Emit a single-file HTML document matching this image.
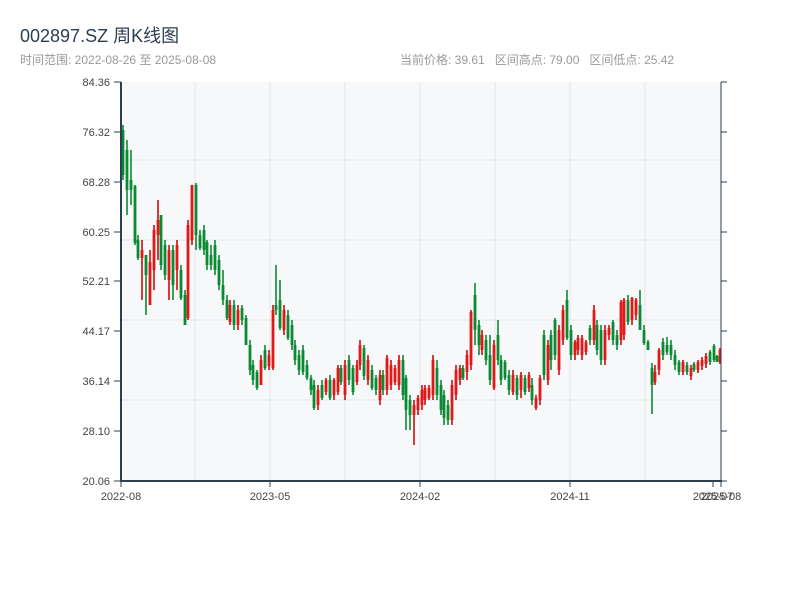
<!DOCTYPE html>
<html><head><meta charset="utf-8">
<style>
body{margin:0;background:#fff;width:800px;height:600px;overflow:hidden;font-family:"Liberation Sans","Noto Sans CJK SC",sans-serif;}
.t{position:absolute;left:20px;top:22px;font-size:18px;color:#2c3e50;}
.s{position:absolute;left:20px;top:51px;font-size:12px;color:#999;}
.r{position:absolute;left:400px;top:51px;font-size:12px;color:#999;}
svg{position:absolute;left:0;top:0;}
</style></head><body>
<div class="t">002897.SZ 周K线图</div>
<div class="s">时间范围: 2022-08-26 至 2025-08-08</div>
<div class="r">当前价格: 39.61&nbsp;&nbsp; 区间高点: 79.00&nbsp;&nbsp; 区间低点: 25.42</div>
<svg width="800" height="600" xmlns="http://www.w3.org/2000/svg" font-family="Liberation Sans, sans-serif" font-size="11" fill="#444">
<rect x="121" y="82" width="600" height="399" fill="#f7f8fa"/>
<g stroke="#e3e5ea" stroke-width="1">
<path d="M195 82V481M270 82V481M345 82V481M420 82V481M495 82V481M570 82V481M645 82V481M121 160H721M121 240H721M121 320H721M121 400H721"/>
</g>
<g stroke="#0a8a32" fill="none">
<path stroke-width="1.6" d="M123 125V180M127 140V215M131 150V205M135 185V245M138 235V260M146 255V315M161 215V270M165 240V280M173 245V300M181 265V300M185 290V325M196 183V250M200 230V250M204 225V255M207 240V270M211 245V270M215 240V275M219 255V290M223 270V305M227 295V320M234 300V330M242 305V325M246 315V345M250 340V375M253 360V385M257 370V390M265 345V370M276 265V315M280 280V330M288 310V340M292 320V350M295 340V365M299 350V375M303 345V375M307 360V380M311 375V395M314 380V410M322 380V400M330 375V400M341 365V385M349 355V385M353 365V395M364 345V380M372 365V390M376 375V395M383 370V395M403 355V400M406 375V430M410 395V430M437 360V400M441 380V415M444 390V425M448 400V425M463 365V380M475 283V345M479 320V355M486 335V365M490 335V385M498 320V365M501 355V385M505 360V380M509 370V395M517 375V400M525 375V395M532 378V405M544 330V380M551 330V370M555 318V360M567 290V340M571 325V360M590 325V345M597 320V355M601 325V365M613 320V345M617 330V350M628 295V325M640 290V330M644 325V345M648 340V350M652 363V414M663 338V360M667 337V355M671 340V360M675 350V370M679 360V375M687 362V375M694 362V372M710 350V365M714 344V362M717 355V362"/>
<path stroke-width="2.8" d="M123 130V175M127 150V190M131 180V190M135 186V243M138 240V258M146 255V275M161 215V265M165 245V275M173 250V285M181 270V298M185 295V325M196 185V235M200 235V248M204 230V250M207 242V265M211 255V265M215 245V270M219 260V285M223 285V300M227 300V318M234 305V325M242 308V320M246 318V345M250 345V370M253 365V380M257 372V388M265 350V368M276 305V310M280 300V328M288 315V338M292 325V345M295 345V360M299 355V370M303 350V372M307 365V378M311 378V390M314 385V408M322 385V398M330 380V398M341 368V382M349 360V380M353 368V392M364 348V376M372 370V388M376 378V390M383 375V390M403 360V395M406 378V410M410 400V415M437 368V395M441 385V410M444 395V418M448 405V420M463 368V378M475 295V330M479 325V345M486 340V360M490 355V380M498 335V360M501 360V380M505 362V378M509 375V390M517 378V395M525 378V392M532 385V400M544 335V375M551 335V360M555 320V355M567 300V338M571 330V355M590 328V340M597 325V350M601 330V360M613 322V340M617 335V345M628 300V322M640 305V330M644 330V343M648 342V350M652 368V385M663 342V355M667 345V352M671 345V355M675 355V365M679 362V372M687 365V372M694 364V370M710 352V362M714 346V360M717 356V362"/>
</g>
<g stroke="#d20a0a" fill="none">
<path stroke-width="1.6" d="M142 240V300M150 250V305M154 225V290M158 200V260M169 245V300M177 240V290M188 220V320M192 185V245M230 300V325M238 305V330M261 355V385M269 350V370M273 305V370M284 305V335M318 385V410M326 378V395M334 378V400M338 365V395M345 360V400M357 360V385M360 340V370M368 355V385M380 370V405M387 355V395M391 360V390M395 365V385M399 355V390M414 400V445M418 395V415M422 385V410M425 385V405M429 385V400M433 355V400M452 380V425M456 365V400M460 365V385M467 350V380M471 310V370M482 330V355M494 340V390M513 370V395M521 372V398M529 372V392M536 395V410M540 375V405M548 340V385M559 325V375M563 305V345M575 340V360M578 335V355M582 335V360M586 340V355M594 305V345M605 325V365M609 325V340M621 300V345M624 298V340M632 297V325M636 298V320M655 365V385M659 348V375M683 360V375M691 365V380M698 360V373M702 357V370M706 353V368M720 348V364"/>
<path stroke-width="2.8" stroke="#e01818" d="M142 250V258M150 262V305M154 230V270M158 220V235M169 250V280M177 245V270M188 225V318M192 185V240M230 305V322M238 310V325M261 360V385M269 355V366M273 310V368M284 310V330M318 390V405M326 380V392M334 380V395M338 368V392M345 365V395M357 365V382M360 345V365M368 360V380M380 375V400M387 358V390M391 365V385M395 368V382M399 360V385M414 405V415M418 398V410M422 390V405M425 388V400M429 388V398M433 360V395M452 385V420M456 370V395M460 368V380M467 355V372M471 312V365M482 335V350M494 345V388M513 375V392M521 375V390M529 375V388M536 398V408M540 378V400M548 345V380M559 330V370M563 310V340M575 342V355M578 338V350M582 338V355M586 342V352M594 310V340M605 330V360M609 328V335M621 302V340M624 300V335M632 298V320M636 300V315M655 372V382M659 350V370M683 362V372M691 368V376M698 362V370M702 360V366M706 356V364M720 350V362"/>
</g>
<g stroke="#2c3e50">
<line x1="121" y1="82" x2="121" y2="482" stroke-width="2"/>
<line x1="721" y1="82" x2="721" y2="481" stroke-width="1"/>
<line x1="120" y1="481" x2="722" y2="481" stroke-width="2"/>
<path stroke-width="1" d="M114 82H121M114 132H121M114 182H121M114 232H121M114 281H121M114 331H121M114 381H121M114 431H121M114 481H121M721 82H727M721 132H727M721 182H727M721 232H727M721 281H727M721 331H727M721 381H727M721 431H727M721 481H727M121 481V487M270 481V487M420 481V487M570 481V487M713 481V487M721 481V487"/>
</g>
<g text-anchor="end">
<text x="110" y="86">84.36</text><text x="110" y="136">76.32</text><text x="110" y="186">68.28</text><text x="110" y="236">60.25</text><text x="110" y="285">52.21</text><text x="110" y="335">44.17</text><text x="110" y="385">36.14</text><text x="110" y="435">28.10</text><text x="110" y="485">20.06</text>
</g>
<g text-anchor="middle">
<text x="121" y="500">2022-08</text><text x="270" y="500">2023-05</text><text x="420" y="500">2024-02</text><text x="570" y="500">2024-11</text><text x="713" y="500">2025-07</text><text x="721" y="500">2025-08</text>
</g>
</svg>
</body></html>
